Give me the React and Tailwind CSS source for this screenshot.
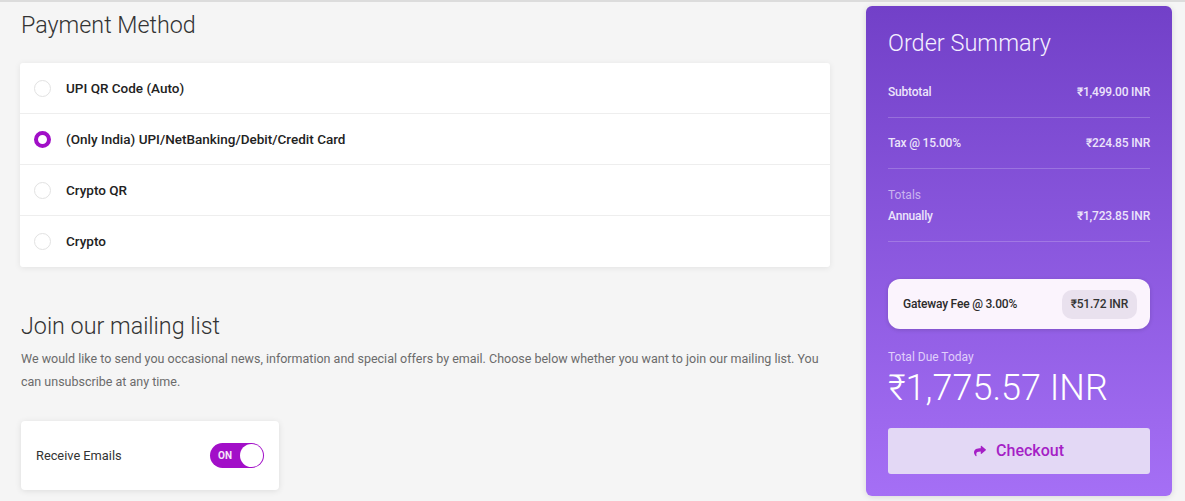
import React from "react";

const font = { fontFamily: "Roboto, 'Noto Sans', Arial, sans-serif" };

function Radio({ checked }) {
  return checked ? (
    <span className="w-[17px] h-[17px] rounded-full border-[4px] border-[#a10fc7] bg-white shrink-0" />
  ) : (
    <span className="w-[17px] h-[17px] rounded-full border-[1.5px] border-[#e2e2e2] bg-white shrink-0" />
  );
}

const methods = [
  { label: "UPI QR Code (Auto)", checked: false },
  { label: "(Only India) UPI/NetBanking/Debit/Credit Card", checked: true },
  { label: "Crypto QR", checked: false },
  { label: "Crypto", checked: false },
];

function Row({ label, value }) {
  return (
    <div className="flex justify-between items-center py-4 border-b border-white/20">
      <span className="text-[12px] leading-[18px] font-medium tracking-[-0.2px] text-[#ece4fb]">{label}</span>
      <span className="text-[12px] leading-[18px] font-medium tracking-[-0.2px] text-[#ece4fb]">{value}</span>
    </div>
  );
}

export default function App() {
  return (
    <div style={font} className="w-[1185px] h-[501px] bg-[#f5f5f5] border-t-[2px] border-[#dcdcdc] overflow-hidden">
      <div className="flex pl-[20px]">
        {/* Left column */}
        <div className="w-[810px] flex flex-col">
          <h2 className="mt-[7px] ml-[1px] text-[23.3px] leading-[32px] font-light text-[#333]">Payment Method</h2>
          <div className="mt-[22px] bg-white rounded-[3px] shadow-[0_1px_6px_rgba(0,0,0,0.08)]">
            {methods.map((m, i) => (
              <div
                key={m.label}
                className={
                  "flex items-center h-[51px] pl-[14px] gap-[15px] " +
                  (i < methods.length - 1 ? "border-b border-[#eeeeee]" : "")
                }
              >
                <Radio checked={m.checked} />
                <span className="text-[13.5px] font-medium text-[#222]">{m.label}</span>
              </div>
            ))}
          </div>

          <h2 className="mt-[43px] ml-[1px] text-[23.3px] leading-[32px] font-light text-[#333]">Join our mailing list</h2>
          <p className="mt-[5px] ml-[1px] text-[12.5px] leading-[23px] text-[#6b6b6b]">
            We would like to send you occasional news, information and special offers by email. Choose below whether you want to join our mailing list. You can unsubscribe at any time.
          </p>
          <div className="mt-[28px] ml-[1px] w-[258px] h-[69px] bg-white rounded-[4px] shadow-[0_1px_6px_rgba(0,0,0,0.1)] flex items-center justify-between px-[15px]">
            <span className="text-[12.8px] text-[#333]">Receive Emails</span>
            <div className="w-[54px] h-[25px] rounded-full bg-[#a20fc8] flex items-center justify-between pl-[8px] pr-[1px]">
              <span className="text-[10px] font-bold text-white/90">ON</span>
              <span className="w-[23px] h-[23px] rounded-full bg-white" />
            </div>
          </div>
        </div>

        {/* Right panel */}
        <div className="ml-[36px] mt-[4px] w-[306px] h-[490px] rounded-[6px] bg-gradient-to-b from-[#7240c8] to-[#a56ff5] px-[22px] pt-[21px] shadow-[0_1px_6px_rgba(0,0,0,0.12)] flex flex-col">
          <h2 className="text-[23.5px] leading-[32px] font-light text-[#f4efff]">Order Summary</h2>
          <div className="mt-[8px]">
            <Row label="Subtotal" value="₹1,499.00 INR" />
            <Row label="Tax @ 15.00%" value="₹224.85 INR" />
            <div className="pt-4 pb-[16px] border-b border-white/20">
              <div className="text-[12px] leading-[20px] text-[#c9b3f0]">Totals</div>
              <div className="flex justify-between items-center mt-[2px]">
                <span className="text-[12px] leading-[18px] font-medium tracking-[-0.2px] text-[#ece4fb]">Annually</span>
                <span className="text-[12px] leading-[18px] font-medium tracking-[-0.2px] text-[#ece4fb]">₹1,723.85 INR</span>
              </div>
            </div>
          </div>

          <div className="mt-[37px] h-[50px] rounded-[12px] bg-[#fbf4fd] shadow-[0_1px_4px_rgba(0,0,0,0.15)] flex items-center justify-between pl-[15px] pr-[13px]">
            <span className="text-[12px] font-medium tracking-[-0.2px] text-[#2b2b2b]">Gateway Fee @ 3.00%</span>
            <span className="h-[29px] px-[9px] rounded-[10px] bg-[#e9e1ee] flex items-center text-[12px] font-medium tracking-[-0.2px] text-[#333]">₹51.72 INR</span>
          </div>

          <div className="mt-[19px] text-[12px] leading-[18px] text-[#e0cffb]">Total Due Today</div>
          <div className="mt-[2px] text-[36px] leading-[40px] font-light text-white">₹1,775.57 INR</div>

          <button className="mt-[20px] h-[46px] rounded-[3px] bg-[#e3d8f5] flex items-center justify-center gap-[10px] text-[16px] font-medium text-[#a51fc6]">
            <svg viewBox="0 0 512 512" width="12" height="12" fill="#a51fc6">
              <path d="M503.691 189.836L327.687 37.851C312.281 24.546 288 35.347 288 56.015v80.053C127.371 137.907 0 170.1 0 322.326c0 61.441 39.581 122.309 83.333 154.132 13.653 9.931 33.111-2.533 28.077-18.631C66.066 312.814 132.917 274.316 288 272.085V360c0 20.7 24.3 31.453 39.687 18.164l176.004-152c11.071-9.562 11.086-26.753 0-36.328z" />
            </svg>
            Checkout
          </button>
        </div>
      </div>
    </div>
  );
}
